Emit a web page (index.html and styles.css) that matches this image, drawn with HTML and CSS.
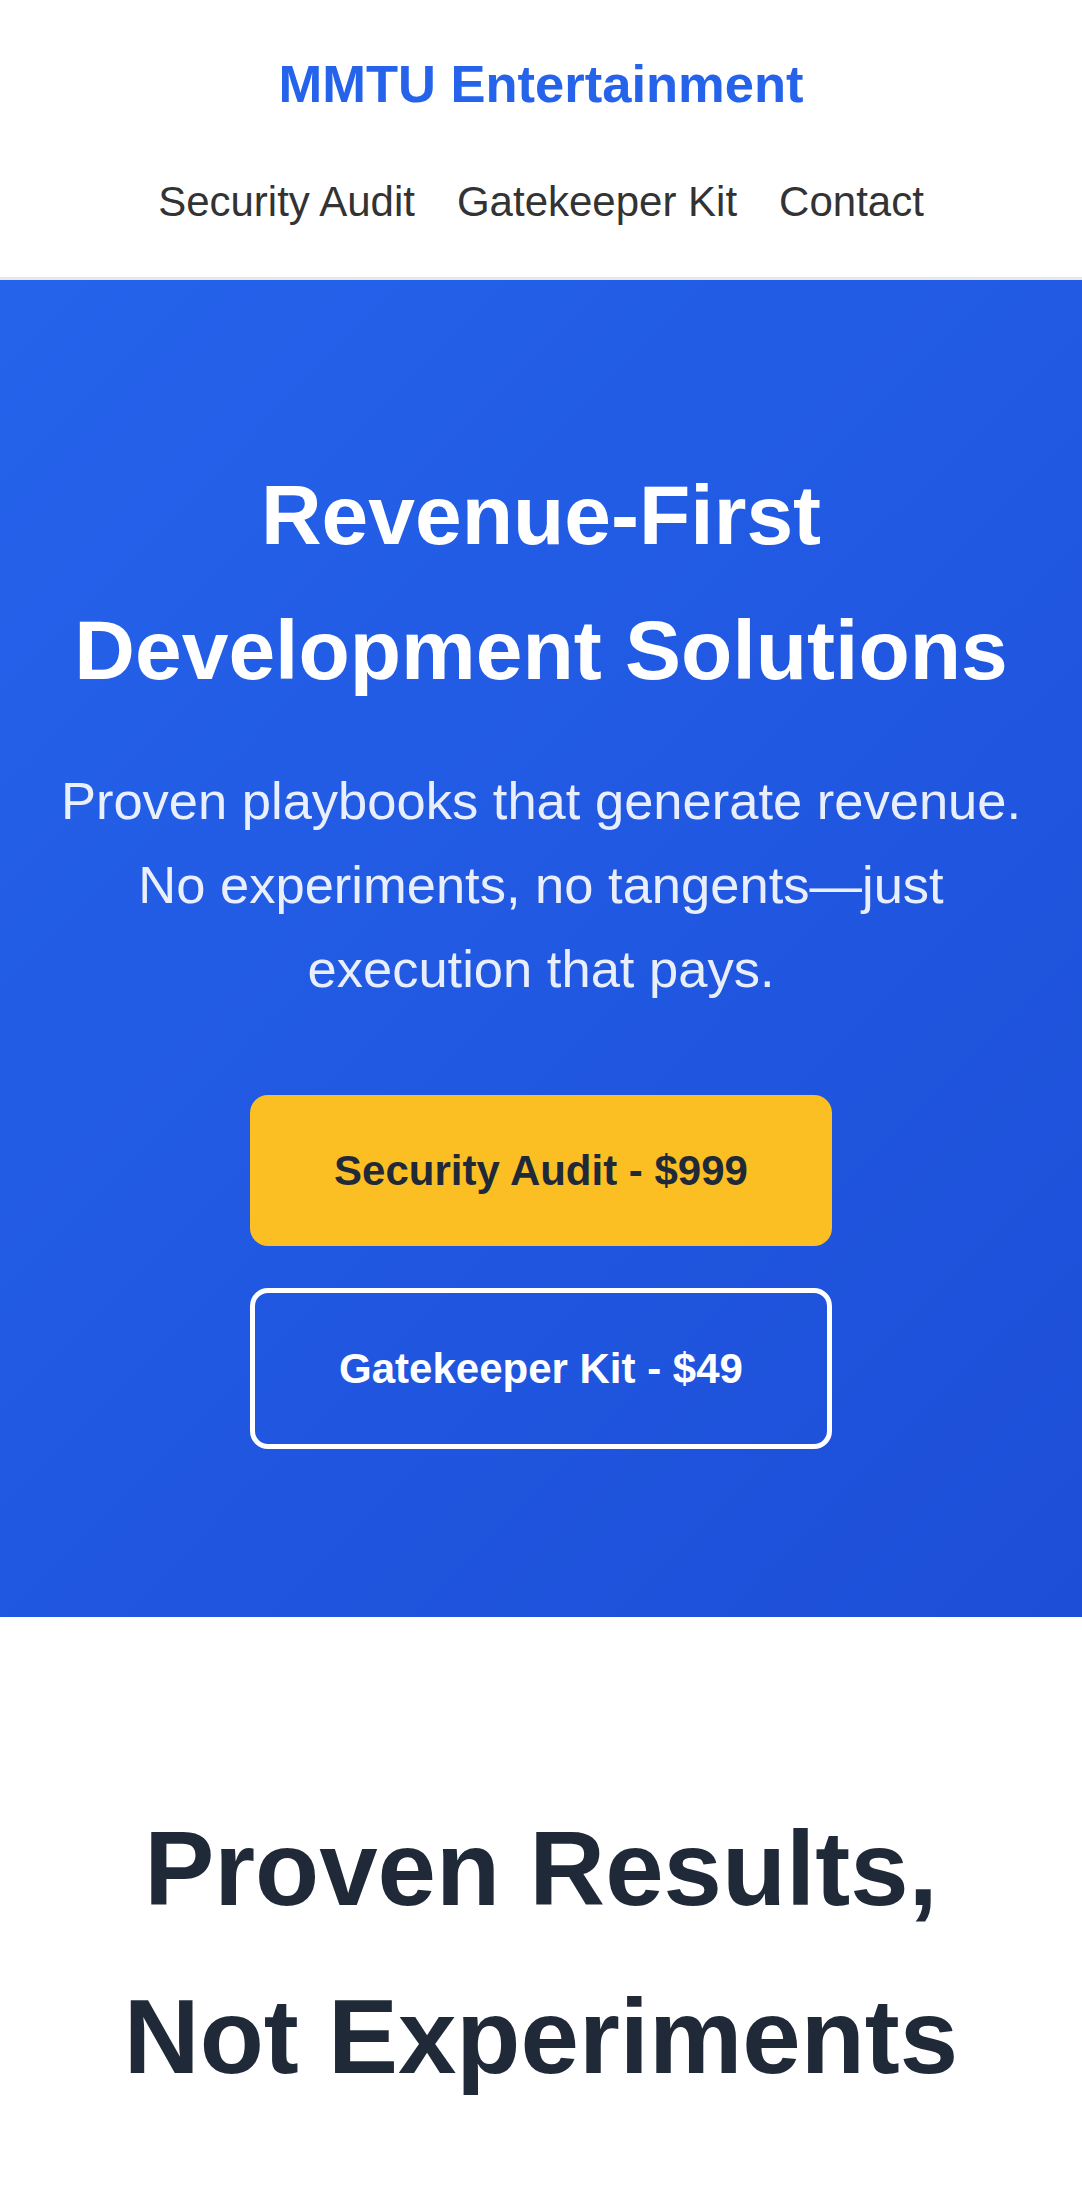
FILE: index.html
```html
<!DOCTYPE html>
<html lang="en">
<head>
<meta charset="utf-8">
<title>MMTU Entertainment</title>
<link rel="stylesheet" href="styles.css">
</head>
<body>
<header class="site-header">
  <h1 class="brand">MMTU Entertainment</h1>
  <nav class="nav">
    <a href="#audit" class="nav-link">Security Audit</a>
    <a href="#kit" class="nav-link">Gatekeeper Kit</a>
    <a href="#contact" class="nav-link">Contact</a>
  </nav>
</header>
<section class="hero">
  <h2 class="hero-title">Revenue-First Development Solutions</h2>
  <p class="hero-sub">Proven playbooks that generate revenue. No experiments, no tangents—just execution that pays.</p>
  <div class="hero-actions">
    <a href="#audit" class="btn btn-primary">Security Audit - $999</a>
    <a href="#kit" class="btn btn-outline">Gatekeeper Kit - $49</a>
  </div>
</section>
<section class="results">
  <h2 class="results-title">Proven Results, Not Experiments</h2>
</section>
</body>
</html>
```
FILE: styles.css
```css
html {
  font-size: 42px;
}
* {
  box-sizing: border-box;
}
body {
  margin: 0;
  font-family: "Liberation Sans", Arial, sans-serif;
  line-height: 1.6;
  color: #333;
  background: #fff;
}
.site-header {
  display: flex;
  flex-direction: column;
  align-items: center;
  padding: 1rem;
  background: #fff;
  border-bottom: 3px solid #e5e7eb;
}
.brand {
  margin: 0;
  font-size: 1.25rem;
  font-weight: 700;
  color: #2563eb;
  line-height: 1.6;
}
.nav {
  display: flex;
  gap: 1rem;
  margin-top: 1rem;
}
.nav-link {
  font-size: 1rem;
  color: #333;
  text-decoration: none;
}
.hero {
  background: linear-gradient(135deg, #2563eb 0%, #1d4ed8 100%);
  color: #fff;
  text-align: center;
  padding: 4rem 1rem;
}
.hero-title {
  margin: 0 0 1rem;
  font-size: 2rem;
  font-weight: 700;
  line-height: 1.6;
}
.hero-sub {
  margin: 0 0 2rem;
  font-size: 1.25rem;
  line-height: 1.6;
  opacity: 0.9;
}
.hero-actions {
  display: flex;
  flex-direction: column;
  align-items: center;
  gap: 1rem;
}
.btn {
  display: inline-block;
  padding: 1rem 2rem;
  font-size: 1rem;
  font-weight: 700;
  line-height: 1.6;
  text-decoration: none;
  border-radius: 18px;
}
.btn-primary {
  background: #fbbf24;
  color: #1f2937;
}
.btn-outline {
  background: transparent;
  color: #fff;
  border: 5.25px solid #fff;
}
.results {
  padding: 4rem 2rem;
  text-align: center;
  background: #fff;
}
.results-title {
  margin: 0;
  font-size: 2.5rem;
  font-weight: 700;
  line-height: 1.6;
  color: #1f2937;
}
```
